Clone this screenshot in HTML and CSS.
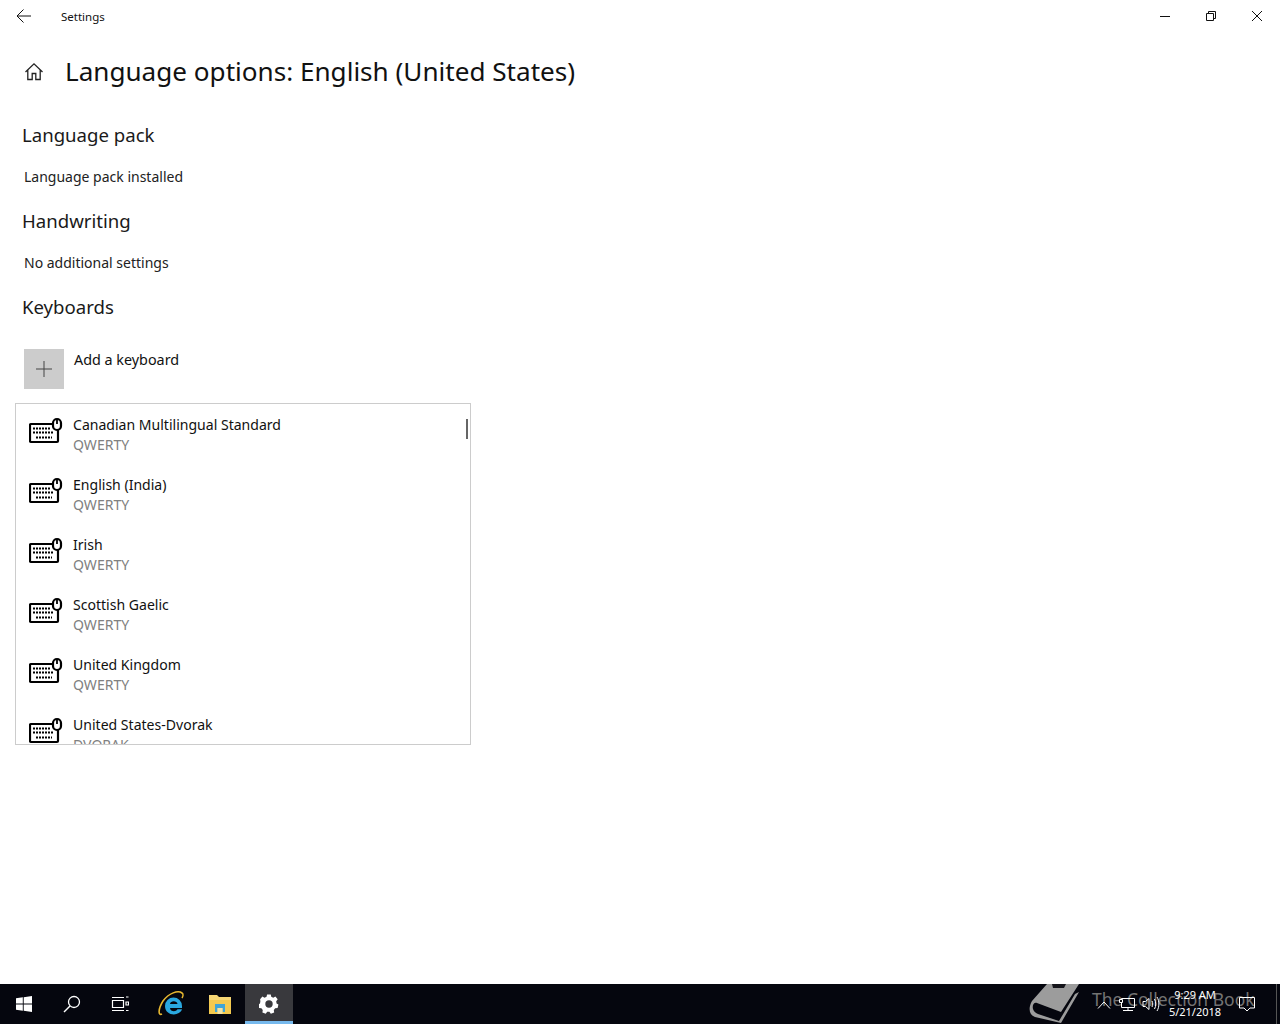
FILE: index.html
```html
<!DOCTYPE html>
<html lang="en">
<head>
<meta charset="utf-8">
<title>Settings</title>
<link rel="stylesheet" href="styles.css">
</head>
<body>
<svg class="defs" width="0" height="0" aria-hidden="true">
  <symbol id="kbd" viewBox="0 0 34 28">
    <path d="M23 7H2a1 1 0 0 0-1 1V24a1 1 0 0 0 1 1H28a1 1 0 0 0 1-1V13" fill="none" stroke="#000" stroke-width="2.200"/>
    <rect x="24" y="2" width="8" height="11" rx="4" fill="#fff" stroke="#000" stroke-width="2.200"/>
    <path d="M28 3v4" stroke="#000" stroke-width="1.800"/>
    <path d="M4 11.500h18M4 15.500h21M7 20.500h16" stroke="#000" stroke-width="2" stroke-dasharray="2 1"/>
  </symbol>
</svg>
<div class="window">
  <header class="titlebar">
    <svg class="back" width="16" height="16" viewBox="0 0 16 16"><path d="M15 8H1.500M7.500 1.500 1 8l6.500 6.500" fill="none" stroke="#111" stroke-width="1"/></svg>
    <span class="app-name">Settings</span>
    <div class="controls">
      <svg class="ctl" width="46" height="32" viewBox="0 0 46 32"><path d="M18 16.500h10" stroke="#111"/></svg>
      <svg class="ctl" width="46" height="32" viewBox="0 0 46 32"><path d="M18.500 13.500h7v7h-7zM20.500 13.500v-2h7v7h-2" fill="none" stroke="#111"/></svg>
      <svg class="ctl" width="46" height="32" viewBox="0 0 46 32"><path d="M18 11l10 10M28 11 18 21" stroke="#111" fill="none"/></svg>
    </div>
  </header>
  <main class="content">
    <div class="page-head">
      <svg class="home" width="20" height="20" viewBox="0 0 20 20"><path d="M1.500 10 10 1.800 18.500 10M3.800 8v9.500h4.400V11.500h3.600v6h4.400V8" fill="none" stroke="#222" stroke-width="1.300"/></svg>
      <h1 class="page-title">Language options: English (United States)</h1>
    </div>
    <h2 class="section first">Language pack</h2>
    <p class="note">Language pack installed</p>
    <h2 class="section">Handwriting</h2>
    <p class="note">No additional settings</p>
    <h2 class="section">Keyboards</h2>
    <div class="add-row">
      <span class="add-tile"><svg width="16" height="16" viewBox="0 0 16 16"><path d="M8 0v16M0 8h16" stroke="#444" stroke-width="1"/></svg></span>
      <span class="add-label">Add a keyboard</span>
    </div>
    <div class="popup">
      <span class="scroll-thumb"></span>
      <div class="kb"><svg class="kb-icon"><use href="#kbd"/></svg><div class="kb-text"><div class="kb-name">Canadian Multilingual Standard</div><div class="kb-sub">QWERTY</div></div></div>
      <div class="kb"><svg class="kb-icon"><use href="#kbd"/></svg><div class="kb-text"><div class="kb-name">English (India)</div><div class="kb-sub">QWERTY</div></div></div>
      <div class="kb"><svg class="kb-icon"><use href="#kbd"/></svg><div class="kb-text"><div class="kb-name">Irish</div><div class="kb-sub">QWERTY</div></div></div>
      <div class="kb"><svg class="kb-icon"><use href="#kbd"/></svg><div class="kb-text"><div class="kb-name">Scottish Gaelic</div><div class="kb-sub">QWERTY</div></div></div>
      <div class="kb"><svg class="kb-icon"><use href="#kbd"/></svg><div class="kb-text"><div class="kb-name">United Kingdom</div><div class="kb-sub">QWERTY</div></div></div>
      <div class="kb"><svg class="kb-icon"><use href="#kbd"/></svg><div class="kb-text"><div class="kb-name">United States-Dvorak</div><div class="kb-sub">DVORAK</div></div></div>
    </div>
  </main>
  <footer class="taskbar">
    <div class="tb-btn"><svg width="16" height="16" viewBox="0 0 16 16"><path d="M0 2.300 6.800 1.300V7.500H0zM7.700 1.200 16 0V7.500H7.700zM0 8.400H6.800V14.700L0 13.700zM7.700 8.400H16V16L7.700 14.800z" fill="#fff"/></svg></div>
    <div class="tb-btn"><svg width="18" height="18" viewBox="0 0 18 18"><circle cx="11" cy="7" r="5.500" fill="none" stroke="#fff" stroke-width="1.300"/><path d="M7 11 1 17" stroke="#fff" stroke-width="1.500"/></svg></div>
    <div class="tb-btn"><svg width="18" height="16" viewBox="0 0 18 16"><path d="M1.500 4.500h11v7h-11zM1 1.500h12M1 14.500h12M15 1h2.500M15 6h2.500v3H15zM15 14.500h2.500" fill="none" stroke="#fff" stroke-width="1.200"/></svg></div>
    <div class="tb-btn tb-app"><svg width="26" height="26" viewBox="0 0 26 26"><path d="M4 23C0 25 0 18 5 10 11 2 20-1 24 2c1.500 1 1 3.500 0 5" fill="none" stroke="#e8b830" stroke-width="1.600"/><path d="M7 15a8.500 8.500 0 0 1 17 0v2H12c.3 3.800 6 4.200 7.500 1.300H24c-2.500 7.500-17 7-17-3.300zM12 13h7.500c-.3-3.700-7.200-3.700-7.500 0z" fill="#2aa8e0" fill-rule="evenodd"/></svg></div>
    <div class="tb-btn tb-app"><svg width="24" height="21" viewBox="0 0 24 21"><path d="M1 1h8l2 2h12v5H1z" fill="#f6d675"/><path d="M1 6h22v14H1z" fill="#f3c94f"/><path d="M7 10h10v8h-2.500v-4h-5v4H7z" fill="#3ea4d8"/><path d="M9.500 14h5v6h-5z" fill="#f3e4a6"/></svg></div>
    <div class="tb-btn tb-app tb-active"><svg width="20" height="20" viewBox="0 0 20 20"><path d="M8 .5h4l.5 2.500 2.200 1 2.300-1.300 2.500 3-1.600 2.100.4 2.400 2 1.300-.9 3.800-2.600.3-1.500 1.900.4 2.500-3.600 1.400-1.600-2h-2.400l-1.600 2-3.600-1.400.4-2.500-1.500-1.900-2.600-.3-.9-3.800 2-1.300.4-2.400L.4 5.700l2.500-3 2.300 1.300 2.200-1z" fill="#fff" transform="scale(.92) translate(.8 0)"/><circle cx="10" cy="10" r="3.700" fill="#39393d"/></svg></div>
    <div class="watermark">
      <svg class="wm-book" width="60" height="40" viewBox="0 0 60 40"><path d="M22 0H54L36 28 12 19C9 18 7 21 8 25 9 28 11 29 13 30L34 37 50 10 54 8 36 39 10 33C4 31 3 24 7 17z" fill="#9c9c9c"/><path d="M27 0H41L39 4H28z" fill="#14141a"/></svg>
      <span class="wm-text">The Collection Book</span>
    </div>
    <div class="tray">
      <svg class="tray-chev" width="14" height="8" viewBox="0 0 14 8"><path d="M1 7.500 7 1l6 6.500" fill="none" stroke="#fff"/></svg>
      <svg class="tray-net" width="18" height="18" viewBox="0 0 18 18"><path d="M3.500 3.500h13v9h-13zM10 12.500v3M5 15.500h10" fill="none" stroke="#fff"/><path d="M1.500 4.500h3v3h-3z" fill="#111" stroke="#fff"/></svg>
      <svg class="tray-vol" width="18" height="16" viewBox="0 0 18 16"><path d="M1 5.500h2.500L7 2.500v11l-3.500-3H1zM10 5c1 2 1 4 0 6M12.500 3c1.700 3 1.700 7 0 10M15 1c2.500 4 2.500 10 0 14" fill="none" stroke="#fff"/></svg>
      <div class="clock"><div>9:29 AM</div><div>5/21/2018</div></div>
      <svg class="tray-note" width="16" height="16" viewBox="0 0 16 16"><path d="M.5 1.500h15v10.500h-4.500L8 15l-3-3H.5z" fill="none" stroke="#fff"/></svg>
      <span class="show-desktop"></span>
    </div>
  </footer>
</div>
</body>
</html>
```
FILE: styles.css
```css
* { box-sizing: border-box; }
html, body { margin: 0; height: 100%; }
body { font-family: "Noto Sans", "Open Sans", "Liberation Sans", sans-serif; color: #000; background: #fff; overflow: hidden; }
.defs { position: absolute; }
.window { height: 1024px; display: flex; flex-direction: column; }

.titlebar { height: 32px; display: flex; align-items: center; flex: none; }
.back { margin-left: 16px; }
.app-name { margin-left: 29px; font-size: 11.500px; color: #111; }
.controls { margin-left: auto; display: flex; }
.ctl { display: block; }

.content { flex: 1; padding: 0 0 0 15px; min-height: 0; }
.page-head { display: flex; align-items: center; height: 40px; margin-top: 20px; }
.home { margin-left: 9px; }
.page-title { margin: -1px 0 1px 21px; font-size: 26.100px; font-weight: 400; line-height: 40px; color: #111; white-space: nowrap; }

.section { margin: 0 0 0 7px; font-size: 18.600px; font-weight: 400; line-height: 28px; height: 28px; color: #1a1a1a; }
.section.first { margin-top: 29px; }
.note { margin: 18px 0 0 9px; font-size: 14px; line-height: 20px; height: 20px; color: #222; }
.note + .section { margin-top: 20px; }

.add-row { display: flex; margin: 28px 0 0 9px; height: 40px; }
.add-tile { width: 40px; height: 40px; background: #ccc; display: flex; align-items: center; justify-content: center; }
.add-label { margin: 1px 0 0 10px; font-size: 14.350px; line-height: 20px; color: #111; }

.popup { position: relative; width: 456px; height: 342px; margin-top: 14px; border: 1px solid #ccc; background: #fff; overflow: hidden; }
.scroll-thumb { position: absolute; right: 2px; top: 15px; width: 2px; height: 20px; background: #666; }
.kb { height: 60px; display: flex; padding-left: 13px; }
.kb-icon { width: 34px; height: 28px; margin-top: 13px; flex: none; }
.kb-text { margin: 11px 0 0 10px; }
.kb-name { font-size: 14.050px; line-height: 20px; color: #111; white-space: nowrap; }
.kb-sub { font-size: 14.050px; line-height: 20px; color: #808080; white-space: nowrap; }

.taskbar { position: relative; height: 40px; flex: none; display: flex; background: #05060e; }
.tb-btn { width: 48px; height: 40px; display: flex; align-items: center; justify-content: center; }
.tb-btn:nth-child(4) { margin-left: 3px; }
.tb-btn:nth-child(5) { margin-left: 1px; }
.tb-btn:nth-child(6) { margin-left: 1px; }
.tb-active { background: #39393d; border-bottom: 3px solid #76b9ed; padding-top: 2px; }

.watermark { position: absolute; left: 1025px; top: 0; height: 40px; display: flex; align-items: center; }
.wm-book { display: block; flex: none; }
.wm-text { margin-left: 7px; font-size: 17.500px; line-height: 24px; color: #737373; white-space: nowrap; margin-top: -10px; }
.tray { position: absolute; right: 0; top: 0; height: 40px; width: 190px; }
.tray svg { position: absolute; }
.tray-chev { left: 7px; top: 17px; }
.tray-net { left: 28px; top: 11px; }
.tray-vol { left: 52px; top: 12px; }
.tray-note { left: 149px; top: 12px; }
.clock { position: absolute; left: 70px; width: 70px; top: 2px; text-align: center; font-size: 11px; line-height: 17px; color: #fff; }
.show-desktop { position: absolute; right: 3px; top: 0; width: 1px; height: 40px; background: #555; }
```
